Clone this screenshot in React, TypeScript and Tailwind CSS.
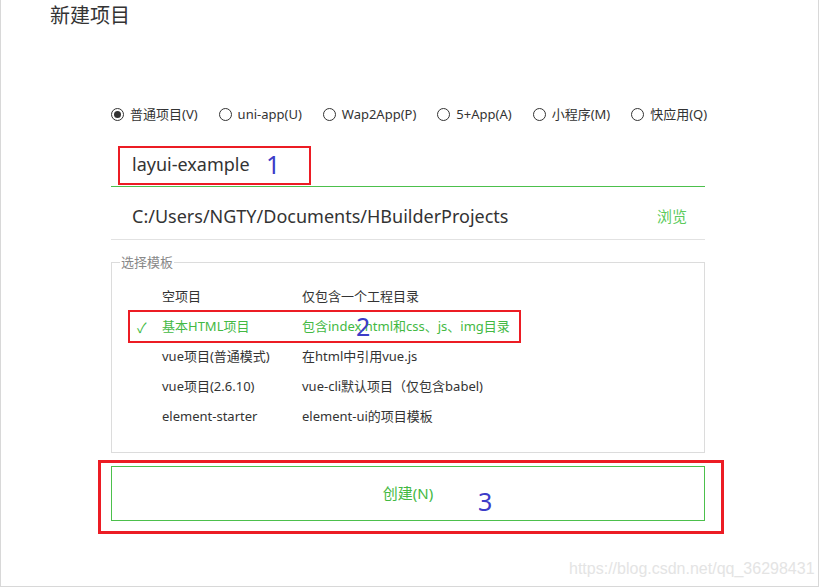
import React from "react";

const font = { fontFamily: '"Noto Sans", "Noto Sans CJK SC", sans-serif' };

const radios = ["普通项目(V)", "uni-app(U)", "Wap2App(P)", "5+App(A)", "小程序(M)", "快应用(Q)"];

const templates = [
  { name: "空项目", desc: "仅包含一个工程目录" },
  { name: "基本HTML项目", desc: "包含index.html和css、js、img目录", active: true },
  { name: "vue项目(普通模式)", desc: "在html中引用vue.js" },
  { name: "vue项目(2.6.10)", desc: "vue-cli默认项目（仅包含babel)" },
  { name: "element-starter", desc: "element-ui的项目模板" },
];

function Radio({ checked }: { checked?: boolean }) {
  return (
    <span className="flex h-[13px] w-[13px] shrink-0 items-center justify-center rounded-full border border-[#333]">
      {checked && <span className="h-[7px] w-[7px] rounded-full bg-[#333]" />}
    </span>
  );
}

export default function App() {
  return (
    <div
      style={font}
      className="relative h-[587px] w-[819px] overflow-hidden border-x border-b border-[#d8d8d8] bg-white text-[#333]"
    >
      <h1 className="pl-[49px] pt-[2px] text-[20px] leading-[28px] text-[#333]">新建项目</h1>

      <div className="ml-[110px] w-[594px] pt-[75px]">
        {/* project type */}
        <div className="flex items-center whitespace-nowrap text-[13px] leading-[18px]">
          {radios.map((r, i) => (
            <label key={r} className={`flex shrink-0 items-center gap-[6px] ${i > 0 ? "ml-[21px]" : ""}`}>
              <Radio checked={i === 0} />
              <span>{r}</span>
            </label>
          ))}
        </div>

        {/* name */}
        <div className="mt-[20px] flex h-[44px] items-center border-b border-b-[#4cc04c] pl-[21px] text-[18px]">
          layui-example
        </div>

        {/* path */}
        <div className="flex h-[53px] items-center justify-between border-b border-b-[#e2e2e2] pl-[21px] pr-[18px] pt-[7px] text-[18px]">
          <span>C:/Users/NGTY/Documents/HBuilderProjects</span>
          <span className="text-[15px] text-[#5ccb5c]">浏览</span>
        </div>

        {/* templates */}
        <fieldset className="mt-[14px] h-[199px] border border-[#dcdcdc] px-[8px] pt-[12px]">
          <legend className="px-[1px] text-[13px] leading-[16px] text-[#888]">选择模板</legend>
          <div className="flex flex-col">
            {templates.map((t) => (
              <div
                key={t.name}
                className={`flex h-[30px] items-center whitespace-nowrap text-[13px] ${t.active ? "text-[#43b943]" : "text-[#333]"}`}
              >
                <span className="w-[42px] pl-[17px] text-[14px]">{t.active ? "✓" : ""}</span>
                <span className="w-[140px]">{t.name}</span>
                <span>{t.desc}</span>
              </div>
            ))}
          </div>
        </fieldset>

        {/* create */}
        <button className="mt-[13px] flex h-[55px] w-full items-center justify-center border border-[#4cc04c] text-[15px] text-[#43b943]">
          创建(N)
        </button>
      </div>

      {/* annotations */}
      <div className="absolute left-[117px] top-[146px] h-[39px] w-[193px] border-2 border-[#ec1c24]" />
      <span className="absolute left-[265px] top-[148px] text-[25px] leading-[32px] text-[#3c3cc8]">1</span>
      <div className="absolute left-[127px] top-[310px] h-[33px] w-[393px] border-2 border-[#ec1c24]" />
      <span className="absolute left-[355px] top-[310px] text-[25px] leading-[32px] text-[#3c3cc8]">2</span>
      <div className="absolute left-[97px] top-[460px] h-[74px] w-[626px] border-[3px] border-[#ec1c24]" />
      <span className="absolute left-[477px] top-[485px] text-[25px] leading-[32px] text-[#3c3cc8]">3</span>

      <span
        style={{ fontFamily: '"Liberation Sans", Arial, sans-serif' }}
        className="absolute left-[568px] top-[559px] text-[16px] leading-[20px] text-[#e4e4e4]"
      >
        https://blog.csdn.net/qq_36298431
      </span>
    </div>
  );
}
